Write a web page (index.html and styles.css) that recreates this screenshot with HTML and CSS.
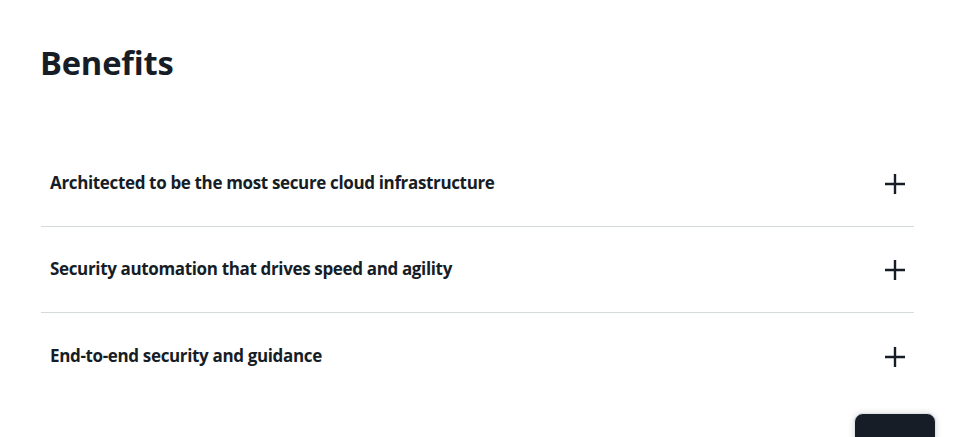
FILE: index.html
```html
<!DOCTYPE html>
<html>
<head>
<meta charset="utf-8">
<link rel="stylesheet" href="styles.css">
</head>
<body>
<main class="page">
  <h2 class="title">Benefits</h2>
  <div class="accordion">
    <button class="item"><span class="label">Architected to be the most secure cloud infrastructure</span>
      <svg class="plus" width="22" height="22" viewBox="0 0 22 22"><path d="M11 1v20M1 11h20" stroke="#161d26" stroke-width="2.4" fill="none"/></svg></button>
    <button class="item"><span class="label">Security automation that drives speed and agility</span>
      <svg class="plus" width="22" height="22" viewBox="0 0 22 22"><path d="M11 1v20M1 11h20" stroke="#161d26" stroke-width="2.4" fill="none"/></svg></button>
    <button class="item last"><span class="label">End-to-end security and guidance</span>
      <svg class="plus" width="22" height="22" viewBox="0 0 22 22"><path d="M11 1v20M1 11h20" stroke="#161d26" stroke-width="2.4" fill="none"/></svg></button>
  </div>
</main>
<div class="fab"></div>
</body>
</html>
```
FILE: styles.css
```css
html, body { margin: 0; padding: 0; background: #fff; overflow: hidden; }
body { font-family: "Open Sans", "Noto Sans", sans-serif; color: #161d26; width: 955px; height: 437px; }
.page { padding: 40px 41px 0 40px; }
.title { margin: 0; font-size: 32.7px; font-weight: 700; line-height: 46px; letter-spacing: -0.2px; }
.accordion { margin-top: 55px; display: flex; flex-direction: column; }
.item { display: flex; align-items: center; justify-content: space-between; height: 86px; padding: 0 8px 0 9px; margin: 0 0 0 1px; border: 0; border-bottom: 1px solid #d5dbdb; background: none; font: inherit; color: inherit; text-align: left; }
.item.last { border-bottom: 0; }
.label { font-size: 17px; font-weight: 700; letter-spacing: -0.35px; margin-bottom: 2px; }
.plus { margin-top: 1px; }
.fab { position: fixed; left: 854px; top: 413px; width: 80px; height: 60px; background: #161d26; border-radius: 9px; box-shadow: 0 0 6px rgba(0,0,0,0.15); border: 1px solid #dfe3e6; }
```
